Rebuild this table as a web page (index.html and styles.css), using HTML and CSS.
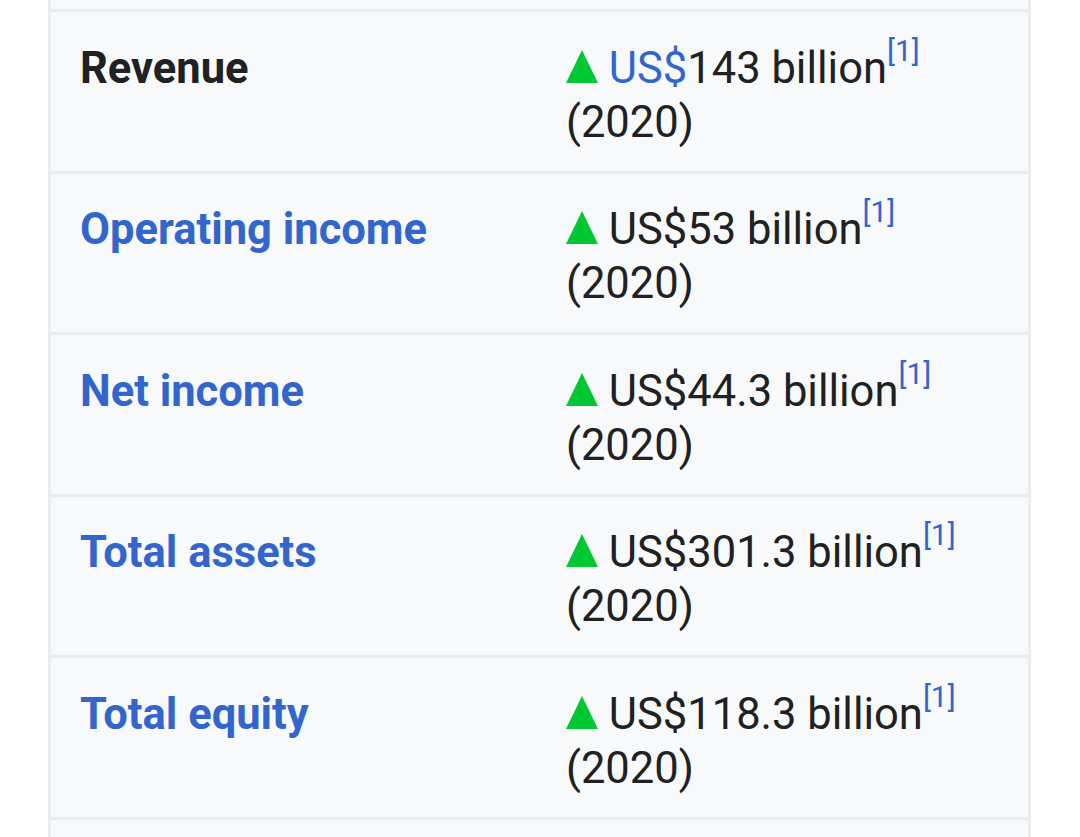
FILE: index.html
```html
<!DOCTYPE html>
<html lang="en">
<head>
<meta charset="utf-8">
<title>Infobox</title>
<link rel="stylesheet" href="styles.css">
</head>
<body>
<div class="infobox">
  <div class="row-partial top"></div>
  <div class="row">
    <div class="label">Revenue</div>
    <div class="value"><svg class="up" viewBox="0 0 32 33" aria-hidden="true"><polygon points="16,0 32,33 0,33"/></svg> <a class="link">US$</a>143 billion<sup class="ref">[1]</sup><br>(2020)</div>
  </div>
  <div class="row">
    <div class="label link">Operating income</div>
    <div class="value"><svg class="up" viewBox="0 0 32 33" aria-hidden="true"><polygon points="16,0 32,33 0,33"/></svg> US$53 billion<sup class="ref">[1]</sup><br>(2020)</div>
  </div>
  <div class="row">
    <div class="label link">Net income</div>
    <div class="value"><svg class="up" viewBox="0 0 32 33" aria-hidden="true"><polygon points="16,0 32,33 0,33"/></svg> US$44.3 billion<sup class="ref">[1]</sup><br>(2020)</div>
  </div>
  <div class="row">
    <div class="label link">Total assets</div>
    <div class="value"><svg class="up" viewBox="0 0 32 33" aria-hidden="true"><polygon points="16,0 32,33 0,33"/></svg> US$301.3 billion<sup class="ref">[1]</sup><br>(2020)</div>
  </div>
  <div class="row">
    <div class="label link">Total equity</div>
    <div class="value"><svg class="up" viewBox="0 0 32 33" aria-hidden="true"><polygon points="16,0 32,33 0,33"/></svg> US$118.3 billion<sup class="ref">[1]</sup><br>(2020)</div>
  </div>
  <div class="row-partial bottom"></div>
</div>
</body>
</html>
```
FILE: styles.css
```css
html, body {
  margin: 0;
  padding: 0;
  background: #ffffff;
  overflow: hidden;
}
body {
  font-family: Roboto, "Liberation Sans", sans-serif;
  color: #202122;
  font-size: 43.5px;
  line-height: 54px;
}
.infobox {
  margin-left: 48px;
  width: 983px;
  box-sizing: border-box;
  border-left: 3px solid #eaecf0;
  border-right: 3px solid #eaecf0;
  background: #f8f9fa;
}
.row-partial.top {
  height: 9px;
}
.row-partial.bottom {
  height: 17px;
  border-top: 3px solid #eaecf0;
}
.row {
  display: grid;
  grid-template-columns: 515px 1fr;
  align-items: baseline;
  border-top: 3px solid #eaecf0;
  padding: 29.6px 0 21px;
}
.label {
  padding-left: 29px;
  font-weight: 700;
}
.link {
  color: #3366cc;
}
.up {
  width: 32px;
  height: 33px;
  vertical-align: baseline;
  fill: #00c832;
}
.ref {
  color: #3366cc;
  font-size: 30px;
  line-height: 0;
  vertical-align: 22px;
}
```
